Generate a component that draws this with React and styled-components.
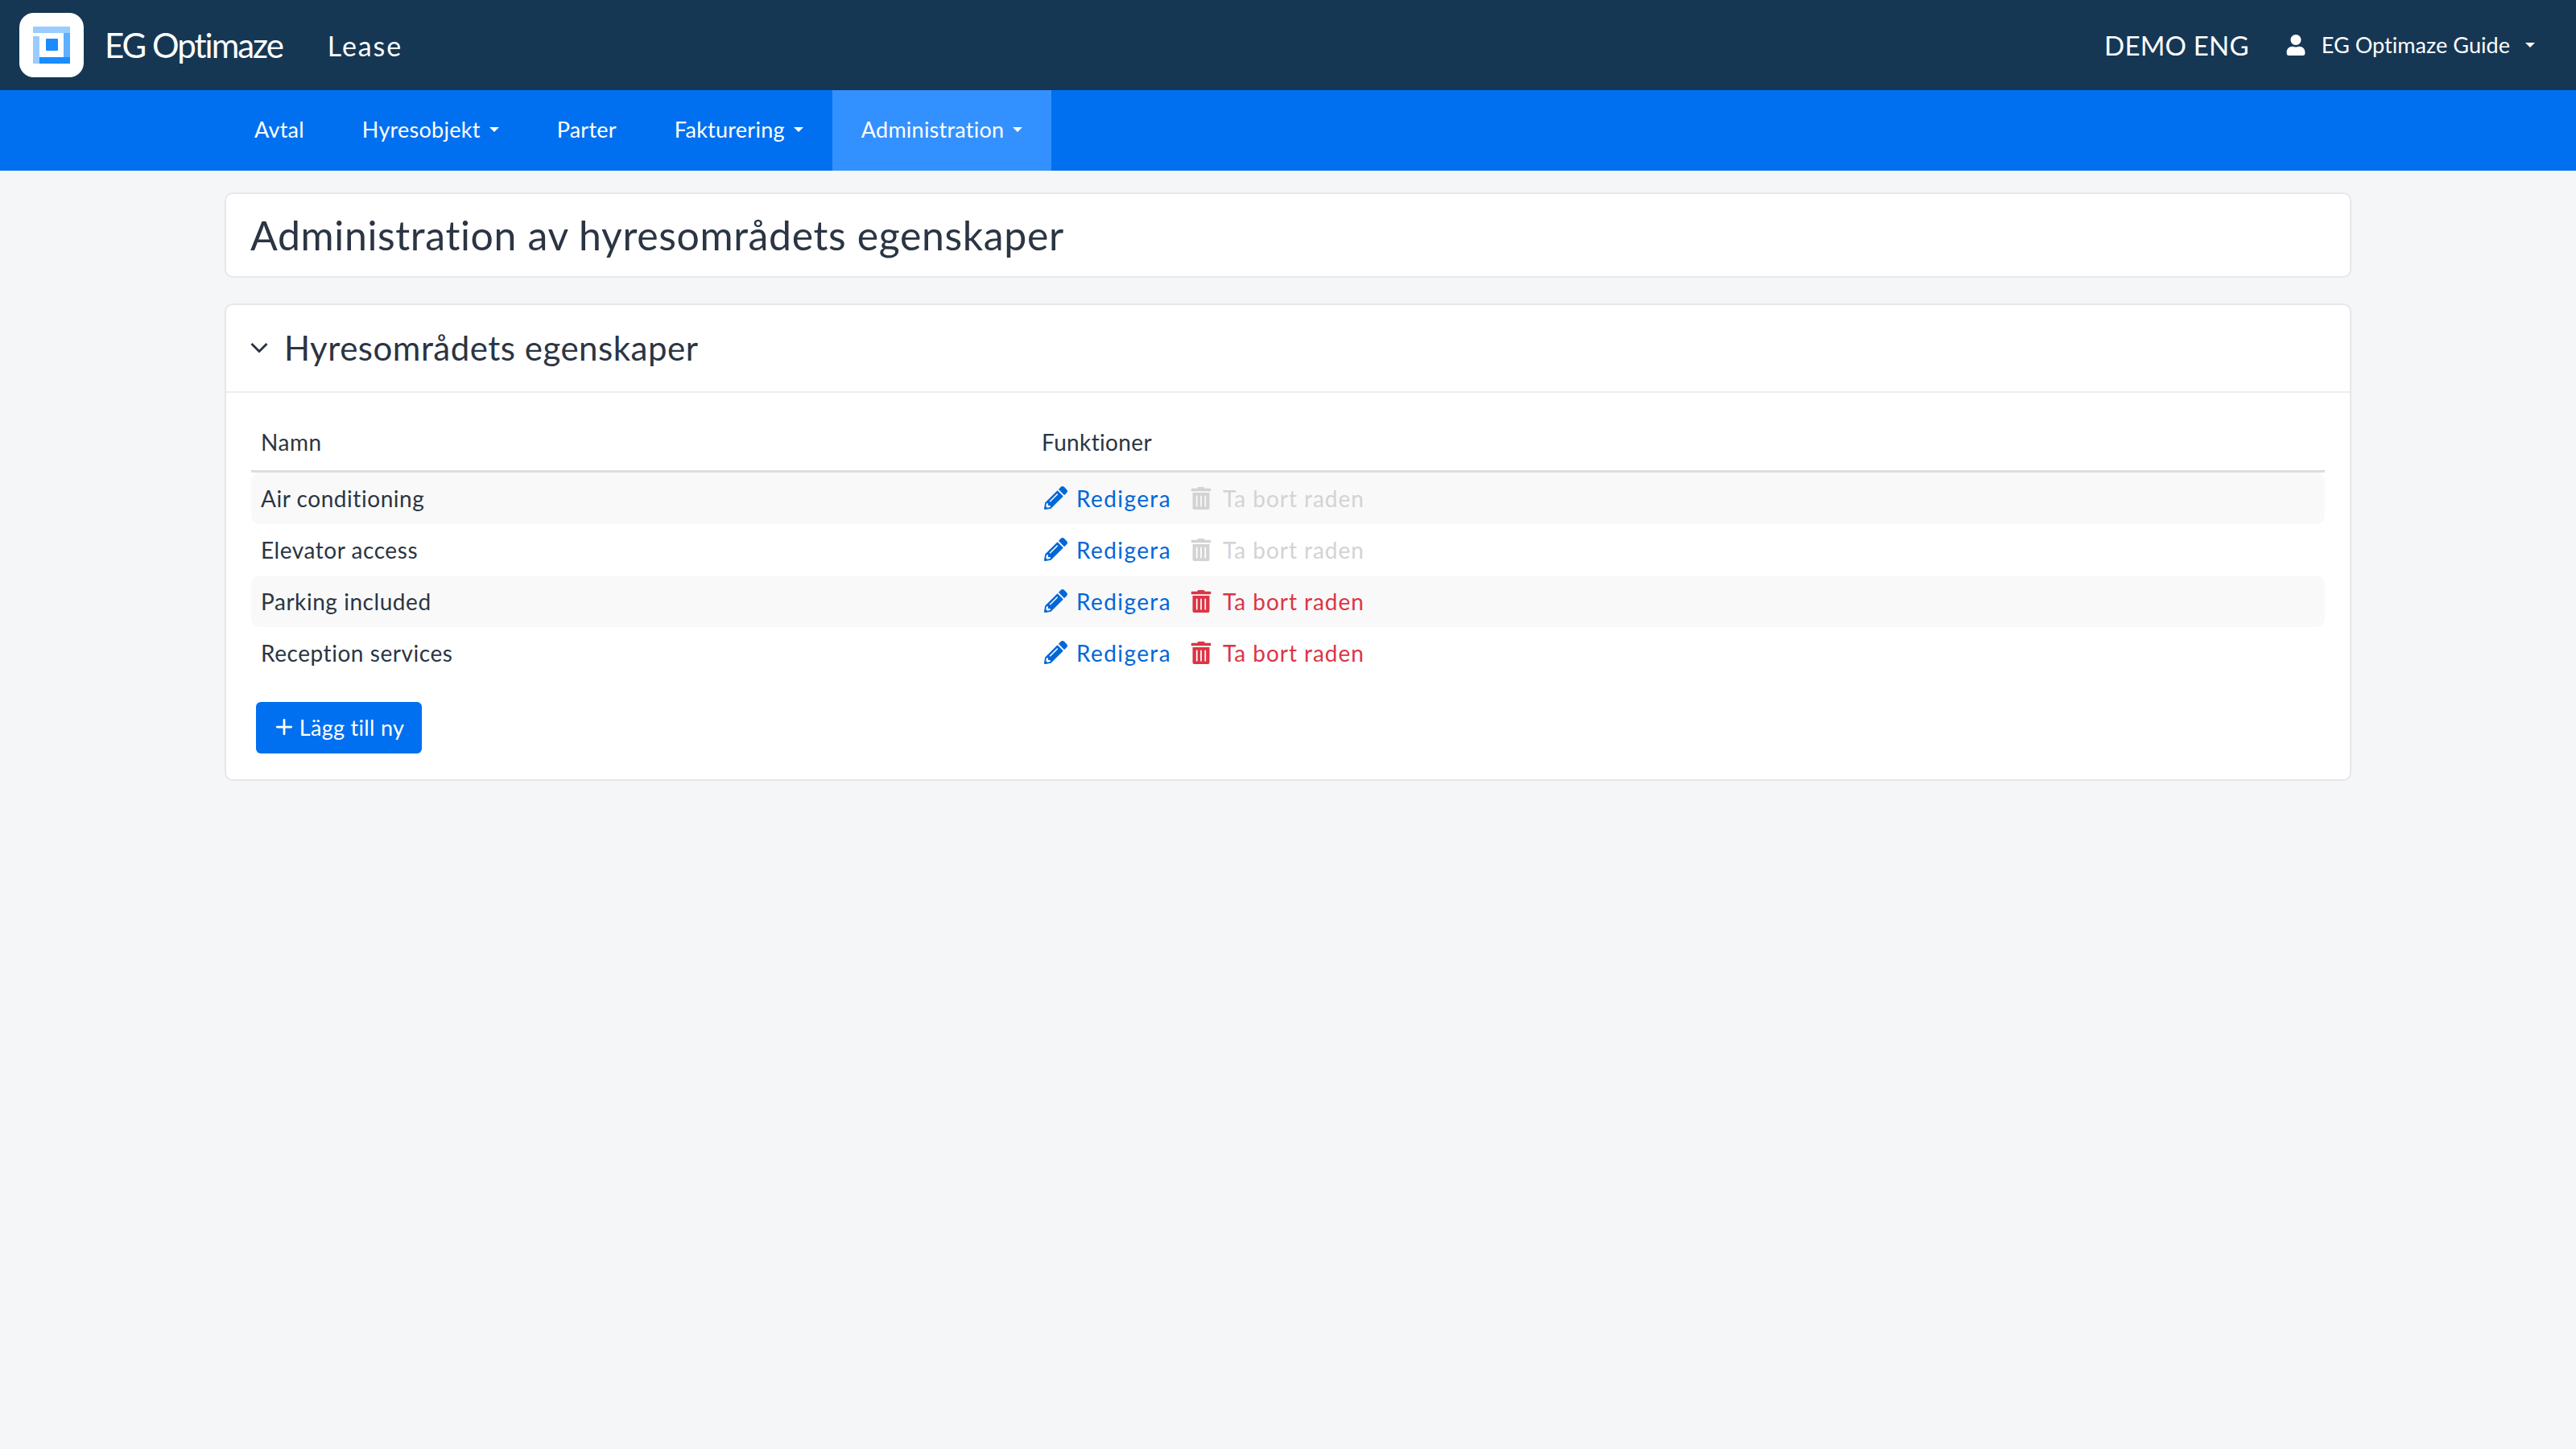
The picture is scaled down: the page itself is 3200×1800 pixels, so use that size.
import React from 'react';
import styled, { createGlobalStyle } from 'styled-components';
import { FaPencilAlt, FaTrashAlt, FaUser } from 'react-icons/fa';
import { Plus } from 'lucide-react';

const Global = createGlobalStyle`
  html, body { margin: 0; padding: 0; background: #f5f6f8; }
  body { font-family: "Lato", "Noto Sans", sans-serif; color: #2b3543; min-height: 1800px; }
  * { box-sizing: border-box; }
`;

const TopBar = styled.header`
  height: 112px; background: #163754; color: #fff;
  display: flex; align-items: center; padding: 0 51px 0 24px;
`;
const LogoBox = styled.div`
  width: 80px; height: 80px; background: #fff; border-radius: 18px;
  display: flex; align-items: center; justify-content: center;
`;
const Brand = styled.span`
  font-size: 42px; margin-left: 26px; letter-spacing: -2px; line-height: 1;
`;
const Product = styled.span`
  font-size: 34px; margin-left: 56px; letter-spacing: 1.9px;
`;
const TopRight = styled.div`
  margin-left: auto; display: flex; align-items: center;
`;
const Tenant = styled.span`
  font-size: 33px; letter-spacing: .2px; margin-right: 45px;
`;
const UserName = styled.span`
  font-size: 27px; margin-left: 19px; letter-spacing: .05px; padding-bottom: 2px;
`;
const Caret = styled.i`
  display: inline-block; width: 0; height: 0; margin-left: ${p => p.$gap || 11}px;
  border-left: 6px solid transparent; border-right: 6px solid transparent; border-top: 6px solid #fff;
`;
const NavBar = styled.nav`
  height: 100px; background: #0070f0; padding-left: 280px; display: flex;
`;
const NavItem = styled.a`
  display: flex; align-items: center; padding: 0 36px 3px; color: #fff; font-size: 27px; letter-spacing: .25px;
  background: ${p => (p.$active ? '#3391ff' : 'transparent')};
`;
const Main = styled.main`
  padding: 27px 279px 0; display: flex; flex-direction: column; gap: 32px;
`;
const Card = styled.section`
  background: #fff; border: 2px solid #e6e7eb; border-radius: 10px;
`;
const PageTitle = styled.h1`
  margin: 0; height: 102px; display: flex; align-items: center; padding-left: 30px;
  font-size: 50px; font-weight: 400; letter-spacing: .62px;
`;
const CardHead = styled.div`
  height: 109px; display: flex; align-items: center; padding: 0 0 2px 30px;
  border-bottom: 2px solid #eeeeee;
`;
const CardTitle = styled.h2`
  margin: 0 0 0 20px; font-size: 42px; font-weight: 400; letter-spacing: .5px;
`;
const CardBody = styled.div`
  padding: 32px 31px;
`;
const HeadRow = styled.div`
  display: flex; align-items: center; height: 67px; border-bottom: 3px solid #dddddd; padding-bottom: 6px;
`;
const Row = styled.div`
  display: flex; align-items: center; height: 64px; padding-bottom: 1px; border-radius: 10px;
  background: ${p => (p.$odd ? '#f9f9f9' : 'transparent')};
`;
const NameCell = styled.div`
  width: 970px; padding-left: 12px; font-size: 28px; letter-spacing: .55px;
`;
const FuncCell = styled.div`
  padding-left: 12px; display: flex; align-items: center; font-size: 28px; letter-spacing: .35px;
`;
const ActionLink = styled.a`
  display: flex; align-items: center; color: ${p => p.$color}; letter-spacing: ${p => p.$spacing}px;
  margin-left: ${p => (p.$first ? '3px' : '23px')};
  svg { display: block; margin-right: ${p => p.$iconGap}px; }
`;
const AddButton = styled.button`
  margin: 29px 0 0 6px; width: 206px; height: 64px; border: 0; border-radius: 6px;
  background: #0070f0; color: #fff; font: inherit; font-size: 27px; letter-spacing: .3px;
  display: flex; align-items: center; justify-content: center; gap: 4px; padding: 0 2px 2px 0;
`;

const Logo = () => (
  <svg width="46" height="46" viewBox="0 0 46 46">
    <rect x="0" y="0" width="46" height="8" fill="#99ccff" />
    <rect x="0" y="12" width="8" height="34" fill="#99ccff" />
    <rect x="38" y="8" width="8" height="30" fill="#5cb0ff" />
    <rect x="8" y="38" width="38" height="8" fill="#1a8cff" />
    <rect x="16" y="15" width="15" height="15" rx="1" fill="#1a8cff" />
  </svg>
);

const Chevron = () => (
  <svg width="22" height="14" viewBox="0 0 22 14" fill="none" stroke="#2b3543" strokeWidth="3">
    <polyline points="1.5,2 11,11.5 20.5,2" />
  </svg>
);

const rows = [
  { name: 'Air conditioning', can: false },
  { name: 'Elevator access', can: false },
  { name: 'Parking included', can: true },
  { name: 'Reception services', can: true },
];

export default function App() {
  return (
    <>
      <Global />
      <TopBar>
        <LogoBox><Logo /></LogoBox>
        <Brand>EG Optimaze</Brand>
        <Product>Lease</Product>
        <TopRight>
          <Tenant>DEMO ENG</Tenant>
          <FaUser size={26} />
          <UserName>EG Optimaze Guide</UserName>
          <Caret $gap={19} />
        </TopRight>
      </TopBar>
      <NavBar>
        <NavItem>Avtal</NavItem>
        <NavItem>Hyresobjekt<Caret /></NavItem>
        <NavItem>Parter</NavItem>
        <NavItem>Fakturering<Caret /></NavItem>
        <NavItem $active>Administration<Caret /></NavItem>
      </NavBar>
      <Main>
        <Card><PageTitle>Administration av hyresområdets egenskaper</PageTitle></Card>
        <Card>
          <CardHead><Chevron /><CardTitle>Hyresområdets egenskaper</CardTitle></CardHead>
          <CardBody>
            <HeadRow>
              <NameCell>Namn</NameCell>
              <FuncCell>Funktioner</FuncCell>
            </HeadRow>
            {rows.map((r, i) => (
              <Row key={r.name} $odd={i % 2 === 0}>
                <NameCell>{r.name}</NameCell>
                <FuncCell>
                  <ActionLink $first $color="#0067d9" $iconGap={11} $spacing={1.4}><FaPencilAlt size={29} />Redigera</ActionLink>
                  <ActionLink $color={r.can ? '#dc3545' : '#d3d3d3'} $iconGap={13} $spacing={.95}><FaTrashAlt size={28} />Ta bort raden</ActionLink>
                </FuncCell>
              </Row>
            ))}
            <AddButton><Plus size={30} strokeWidth={2.2} />Lägg till ny</AddButton>
          </CardBody>
        </Card>
      </Main>
    </>
  );
}
